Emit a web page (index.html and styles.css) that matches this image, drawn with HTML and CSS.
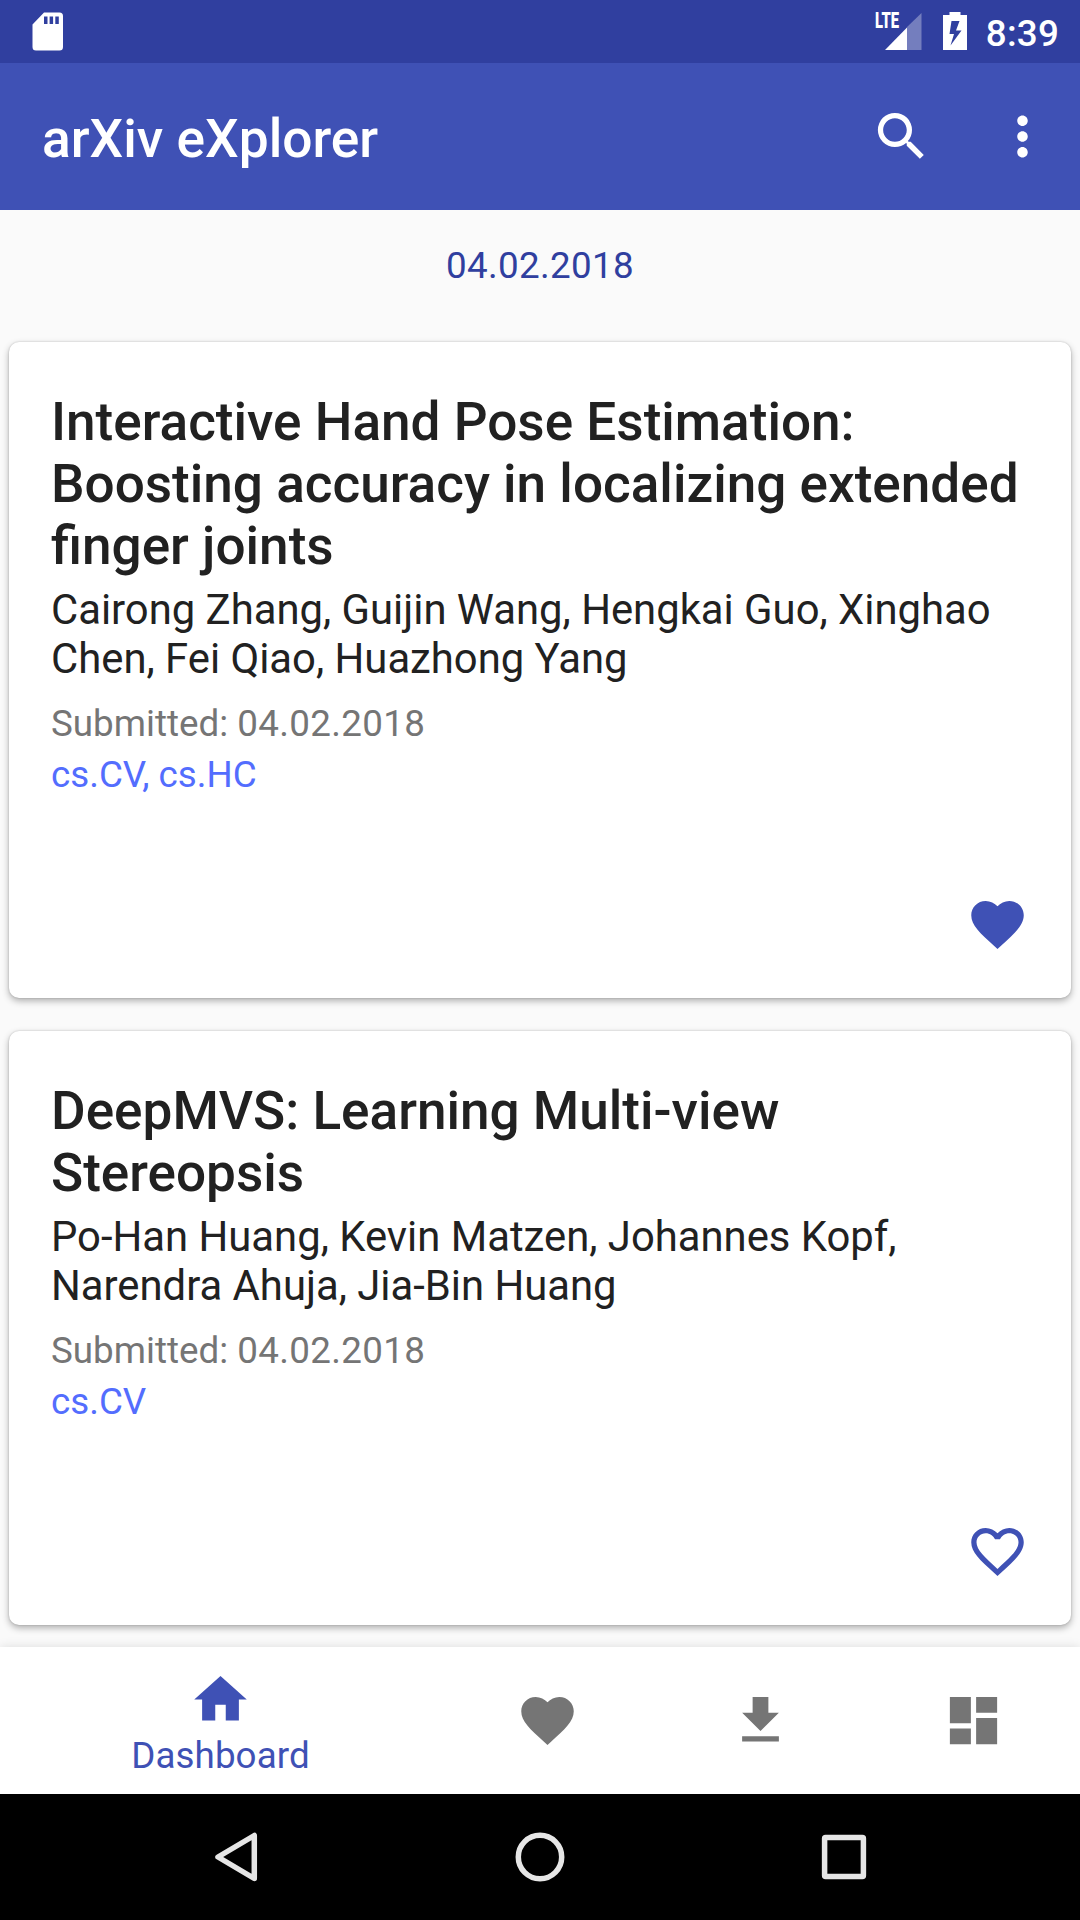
FILE: index.html
```html
<!DOCTYPE html>
<html lang="en">
<head>
<meta charset="utf-8">
<title>arXiv eXplorer</title>
<link rel="stylesheet" href="styles.css">
</head>
<body>
<div class="screen">
  <div class="status-bar">
    <svg class="sd" viewBox="0 0 31 39"><path fill-rule="evenodd" d="M12 .5H27.500a3.500 3.500 0 0 1 3.500 3.500V35a3.500 3.500 0 0 1-3.500 3.500H4A3.500 3.500 0 0 1 .5 35V12.500zM12 4.500V12h3.500V4.500zM17.600 4.500V12h3.500V4.500zM23.300 4.500V12h3.500V4.500z"/></svg>
    <div class="status-icons">
      <div class="signal">
        <svg viewBox="0 0 46 38"><path opacity=".33" d="M31 14 45.500 0V37H31z"/><path d="M9 37 31 14.500V37z"/></svg>
        <span class="lte">LTE</span>
      </div>
      <svg class="battery" viewBox="0 0 24 38"><path fill-rule="evenodd" d="M6.500 0h11v3H24v37H0V3h6.500zM8.500 9 6.500 22H11L7.500 33.500 18.500 18.500H13L16.500 9z"/></svg>
      <span class="clock">8:39</span>
    </div>
  </div>

  <header class="toolbar">
    <h1 class="app-title">arXiv eXplorer</h1>
    <svg class="icon" viewBox="0 0 24 24"><path d="M15.500 14h-.79l-.28-.27A6.471 6.471 0 0 0 16 9.500 6.500 6.500 0 1 0 9.500 16c1.610 0 3.090-.59 4.230-1.570l.27.280v.79l5 4.990L20.490 19l-4.990-5zm-6 0C7.010 14 5 11.990 5 9.500S7.010 5 9.500 5 14 7.010 14 9.500 11.990 14 9.500 14z"/></svg>
    <svg class="icon more" viewBox="0 0 24 24"><path d="M12 8c1.100 0 2-.9 2-2s-.9-2-2-2-2 .9-2 2 .9 2 2 2zm0 2c-1.100 0-2 .9-2 2s.9 2 2 2 2-.9 2-2-.9-2-2-2zm0 6c-1.100 0-2 .9-2 2s.9 2 2 2 2-.9 2-2-.9-2-2-2z"/></svg>
  </header>

  <main class="feed">
    <div class="date digits">04.02.2018</div>
    <article class="card">
      <h2 class="title">Interactive Hand Pose Estimation: Boosting accuracy in localizing extended finger joints</h2>
      <p class="authors">Cairong Zhang, Guijin Wang, Hengkai Guo, Xinghao Chen, Fei Qiao, Huazhong Yang</p>
      <p class="submitted">Submitted: <span class="digits">04.02.2018</span></p>
      <p class="categories">cs.CV, cs.HC</p>
      <svg class="icon favorite" viewBox="0 0 24 24"><path d="M12 21.350l-1.450-1.320C5.400 15.360 2 12.280 2 8.500 2 5.420 4.420 3 7.500 3c1.740 0 3.410.81 4.500 2.090C13.090 3.810 14.760 3 16.500 3 19.580 3 22 5.420 22 8.500c0 3.780-3.400 6.860-8.550 11.540L12 21.350z"/></svg>
    </article>
    <article class="card">
      <h2 class="title">DeepMVS: Learning Multi-view Stereopsis</h2>
      <p class="authors">Po-Han Huang, Kevin Matzen, Johannes Kopf, Narendra Ahuja, Jia-Bin Huang</p>
      <p class="submitted">Submitted: <span class="digits">04.02.2018</span></p>
      <p class="categories">cs.CV</p>
      <svg class="icon favorite" viewBox="0 0 24 24"><path d="M16.500 3c-1.740 0-3.410.81-4.500 2.090C10.910 3.810 9.240 3 7.500 3 4.420 3 2 5.420 2 8.500c0 3.780 3.400 6.860 8.550 11.540L12 21.350l1.450-1.320C18.600 15.360 22 12.280 22 8.500 22 5.420 19.580 3 16.500 3zm-4.400 15.550l-.1.100-.1-.1C7.140 14.240 4 11.390 4 8.500 4 6.500 5.500 5 7.500 5c1.540 0 3.040.99 3.570 2.360h1.870C13.460 5.990 14.960 5 16.500 5c2 0 3.500 1.500 3.500 3.500 0 2.890-3.140 5.740-7.900 10.050z"/></svg>
    </article>
  </main>

  <nav class="bottom-nav">
    <div class="tab active">
      <svg class="icon" viewBox="0 0 24 24"><path d="M10 20v-6h4v6h5v-8h3L12 3 2 12h3v8z"/></svg>
      <span class="label">Dashboard</span>
    </div>
    <div class="tab"><svg class="icon" viewBox="0 0 24 24"><path d="M12 21.350l-1.450-1.320C5.400 15.360 2 12.280 2 8.500 2 5.420 4.420 3 7.500 3c1.740 0 3.410.81 4.500 2.090C13.090 3.810 14.760 3 16.500 3 19.580 3 22 5.420 22 8.500c0 3.780-3.400 6.860-8.550 11.540L12 21.350z"/></svg></div>
    <div class="tab"><svg class="icon" viewBox="0 0 24 24"><path d="M19 9h-4V3H9v6H5l7 7 7-7zM5 18v2h14v-2H5z"/></svg></div>
    <div class="tab"><svg class="icon" viewBox="0 0 24 24"><path d="M3 13h8V3H3v10zm0 8h8v-6H3v6zm10 0h8V11h-8v10zm0-18v6h8V3h-8z"/></svg></div>
  </nav>

  <div class="system-nav">
    <svg viewBox="0 0 56 56"><path d="M46.300 6.500V49.500L10 28z"/></svg>
    <svg viewBox="0 0 56 56"><circle cx="28" cy="28" r="21.700"/></svg>
    <svg viewBox="0 0 56 56"><rect x="8.600" y="8.600" width="38.800" height="38.800" rx="1"/></svg>
  </div>
</div>
</body>
</html>
```
FILE: styles.css
```css
* { box-sizing: border-box; margin: 0; padding: 0; }

body {
  background: #fafafa;
  color: #212121;
  font-family: Roboto, sans-serif;
}

svg { display: block; flex: none; fill: currentColor; }

.screen {
  width: 1080px;
  height: 1920px;
  display: flex;
  flex-direction: column;
  overflow: hidden;
}

.status-bar {
  height: 63px;
  flex: none;
  display: flex;
  justify-content: space-between;
  padding: 12px 21px 0 32px;
  background: #303f9f;
  color: #fff;
}
.sd { width: 31px; height: 39px; }
.status-icons { display: flex; }
.signal { position: relative; width: 46px; margin: 1px 21px 0 0; }
.signal svg { width: 46px; height: 38px; }
.lte {
  position: absolute;
  left: -1px;
  top: -1px;
  font-size: 22px;
  font-weight: 900;
  line-height: 18px;
  transform: scaleX(.67);
  transform-origin: left;
}
.battery { width: 24px; height: 38px; margin-right: 19px; }
.clock {
  font-size: 36.75px;
  font-weight: 500;
  line-height: 43px;
  letter-spacing: .2px;
}

.toolbar {
  height: 147px;
  flex: none;
  display: flex;
  align-items: center;
  padding: 0 26px 0 42px;
  background: #3f51b5;
  color: #fff;
}
.app-title {
  flex: 1;
  font-size: 53.3px;
  font-weight: 500;
  line-height: 62px;
  padding-top: 4px;
}
.icon { width: 63px; height: 63px; }
.more { margin-left: 58px; }

.feed { height: 1437px; flex: none; overflow: hidden; }
.date {
  height: 132px;
  padding-top: 34px;
  text-align: center;
  color: #303f9f;
  font-size: 36.75px;
  line-height: 43px;
}
.digits { letter-spacing: .36px; }

.card {
  display: flex;
  flex-direction: column;
  margin: 0 9px 33px;
  padding: 49px 42px 42px;
  background: #fff;
  border-radius: 10px;
  box-shadow: 0 0 2px rgba(0, 0, 0, .2), 0 3px 7px rgba(0, 0, 0, .3);
}
.title { font-size: 53.1px; font-weight: 500; line-height: 62px; }
.authors { margin-top: 8px; font-size: 41.8px; line-height: 49px; }
.submitted {
  margin-top: 19px;
  color: #757575;
  font-size: 36.75px;
  line-height: 43px;
}
.categories {
  margin-top: 8px;
  color: #536dfe;
  font-size: 36.75px;
  line-height: 43px;
}
.favorite { margin-top: 97px; align-self: flex-end; color: #3f51b5; }

.bottom-nav {
  position: relative;
  height: 147px;
  flex: none;
  display: flex;
  background: #fff;
  color: #757575;
  box-shadow: 0 0 10px rgba(0, 0, 0, .12);
}
.tab {
  width: 213px;
  display: flex;
  flex-direction: column;
  align-items: center;
  padding-top: 42px;
}
.active { width: 441px; padding-top: 21px; color: #3f51b5; }
.label {
  margin-top: 3px;
  font-size: 36.75px;
  line-height: 43px;
  letter-spacing: .1px;
}

.system-nav {
  position: relative;
  height: 126px;
  flex: none;
  display: flex;
  justify-content: center;
  align-items: center;
  gap: 248px;
  background: #000;
}
.system-nav svg {
  width: 56px;
  height: 56px;
  fill: none;
  stroke: #e6e6e6;
  stroke-width: 5.5;
  stroke-linejoin: round;
}
```
